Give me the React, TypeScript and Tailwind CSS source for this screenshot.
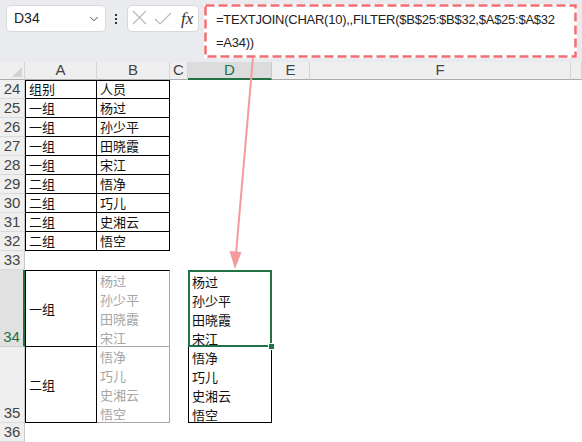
import { ChevronDown } from "lucide-react";

const cjk = { fontFamily: '"Noto Sans CJK SC", "Noto Sans", sans-serif' };
const latin = { fontFamily: '"Liberation Sans", Arial, sans-serif' };

const table = [
  ["组别", "人员"],
  ["一组", "杨过"],
  ["一组", "孙少平"],
  ["一组", "田晓霞"],
  ["一组", "宋江"],
  ["二组", "悟净"],
  ["二组", "巧儿"],
  ["二组", "史湘云"],
  ["二组", "悟空"],
];

const group1 = ["杨过", "孙少平", "田晓霞", "宋江"];
const group2 = ["悟净", "巧儿", "史湘云", "悟空"];

const RowHead = ({ n, active }: { n: number; active?: boolean }) => (
  <div
    style={latin}
    className={
      active
        ? "flex items-end justify-center bg-[#e1e1e1] border-b border-b-[#d0d0d0] border-r-2 border-r-[#217346] text-[15px] leading-[19px] text-[#217346]"
        : "flex items-end justify-center bg-[#efefef] border-b border-b-[#dadada] border-r border-r-[#c8c8c8] text-[15px] leading-[19px] text-[#444]"
    }
  >
    {n}
  </div>
);

const Blank = () => <div />;

const Toolbar = () => (
  <div className="relative flex h-[62px] items-start bg-[#e9ebee] pl-[6px] pt-[5px]">
    <div
      style={latin}
      className="flex h-[27px] w-[100px] items-center justify-between rounded-[5px] border border-[#d9d9d9] bg-white pl-[7px] pr-[4px] text-[14px] text-[#222]"
    >
      D34
      <ChevronDown size={14} strokeWidth={1.6} className="text-[#444]" />
    </div>
    <div className="ml-[9px] mt-[9px] flex flex-col gap-[2px]">
      <span className="h-[2px] w-[2px] bg-[#333]" />
      <span className="h-[2px] w-[2px] bg-[#333]" />
      <span className="h-[2px] w-[2px] bg-[#333]" />
    </div>
    <div className="ml-[10px] flex h-[27px] w-[72px] items-center rounded-[5px] border border-[#d9d9d9] bg-white pl-[4px]">
      <svg width="46" height="20" viewBox="0 0 46 20" className="shrink-0">
        <path d="M1 2 L14 15 M14 2 L1 15" stroke="#b9b9b9" strokeWidth="1.2" fill="none" />
        <path d="M23 10 L28 15 L39 4" stroke="#b9b9b9" strokeWidth="1.2" fill="none" />
      </svg>
      <span
        style={{ fontFamily: '"Liberation Serif", "Times New Roman", serif' }}
        className="ml-[3px] text-[17px] italic leading-none text-[#333]"
      >
        fx
      </span>
    </div>
    <div className="relative ml-[5px] mt-[-1px] h-[54px] w-[373px] bg-white">
      <div
        style={latin}
        className="pl-[12px] pt-[4px] text-[13px] leading-[23px] tracking-[-0.25px] text-[#222]"
      >
        <div>=TEXTJOIN(CHAR(10),,FILTER($B$25:$B$32,$A$25:$A$32</div>
        <div>=A34))</div>
      </div>
      <svg className="pointer-events-none absolute inset-0" width="373" height="54">
        <rect
          x="1.5"
          y="1.5"
          width="370"
          height="51"
          fill="none"
          stroke="#f36e72"
          strokeWidth="2.5"
          strokeDasharray="9 4"
        />
      </svg>
    </div>
  </div>
);

const App = () => {
  const heads = ["A", "B", "C", "D", "E", "F", ""];
  return (
    <div className="relative h-[442px] w-[582px] overflow-hidden bg-white">
      <Toolbar />
      <div className="grid grid-cols-[25px_72px_73px_18px_84px_38px_261px_1fr] grid-rows-[18px_repeat(10,19px)_77px_76px_19px]">
        {/* corner */}
        <div className="relative bg-[#efefef] border-r border-b border-r-[#d4d4d4] border-b-[#ababab]">
          <svg className="absolute left-0 top-0" width="25" height="18">
            <polygon points="22,5 22,15 12,15" fill="#d3d3d3" />
          </svg>
        </div>
        {heads.map((h) =>
          h === "D" ? (
            <div
              key={h}
              style={latin}
              className="flex items-center justify-center border-r border-r-[#c8c8c8] border-b-2 border-b-[#217346] bg-[#dcdcdc] text-[15px] text-[#217346]"
            >
              {h}
            </div>
          ) : (
            <div
              key={h || "rest"}
              style={latin}
              className="flex items-center justify-center border-r border-b border-r-[#d4d4d4] border-b-[#ababab] bg-[#efefef] text-[15px] text-[#444]"
            >
              {h}
            </div>
          )
        )}

        {/* rows 24-32 */}
        {table.map(([a, b], i) => (
          <div key={i} className="contents">
            <RowHead n={24 + i} />
            <div
              style={cjk}
              className={
                (i === 0 ? "shadow-[inset_0_1px_0_#000] " : "") +
                "border-l border-r border-b border-black px-[3px] text-[13px] leading-[18px] text-[#111]"
              }
            >
              {a}
            </div>
            <div
              style={cjk}
              className={
                (i === 0 ? "shadow-[inset_0_1px_0_#000] " : "") +
                "border-r border-b border-black px-[3px] text-[13px] leading-[18px] text-[#111]"
              }
            >
              {b}
            </div>
            <Blank />
            <Blank />
            <Blank />
            <Blank />
            <Blank />
          </div>
        ))}

        {/* row 33 */}
        <RowHead n={33} />
        <Blank />
        <Blank />
        <Blank />
        <Blank />
        <Blank />
        <Blank />
        <Blank />

        {/* row 34 */}
        <RowHead n={34} active />
        <div
          style={cjk}
          className="flex items-center border border-black px-[3px] text-[13px] text-[#111]"
        >
          一组
        </div>
        <div
          style={cjk}
          className="border-t border-t-black border-r border-b border-r-[#a8a8a8] border-b-[#a8a8a8] px-[3px] text-[13px] leading-[19px] text-[#a6a6a6]"
        >
          {group1.map((t) => (
            <div key={t}>{t}</div>
          ))}
        </div>
        <Blank />
        <div
          style={cjk}
          className="relative border-2 border-[#217346] px-[2px] text-[13px] leading-[19px] text-[#111]"
        >
          {group1.map((t) => (
            <div key={t}>{t}</div>
          ))}
          <span className="absolute -bottom-[5px] -right-[5px] h-[7px] w-[7px] border border-white bg-[#217346]" />
        </div>
        <Blank />
        <Blank />
        <Blank />

        {/* row 35 */}
        <RowHead n={35} />
        <div
          style={cjk}
          className="flex items-center border-l border-r border-b border-black px-[3px] text-[13px] text-[#111]"
        >
          二组
        </div>
        <div
          style={cjk}
          className="border-r border-b border-r-[#a8a8a8] border-b-[#a8a8a8] px-[3px] text-[13px] leading-[19px] text-[#a6a6a6]"
        >
          {group2.map((t) => (
            <div key={t}>{t}</div>
          ))}
        </div>
        <Blank />
        <div
          style={cjk}
          className="border-l border-r border-b border-black px-[3px] pt-[1px] text-[13px] leading-[19px] text-[#111]"
        >
          {group2.map((t) => (
            <div key={t}>{t}</div>
          ))}
        </div>
        <Blank />
        <Blank />
        <Blank />

        {/* row 36 */}
        <RowHead n={36} />
        <Blank />
        <Blank />
        <Blank />
        <Blank />
        <Blank />
        <Blank />
        <Blank />
      </div>

      {/* annotation arrow */}
      <svg className="pointer-events-none absolute left-0 top-0" width="582" height="442">
        <line x1="253" y1="57" x2="236" y2="254" stroke="#f49a9a" strokeWidth="2" />
        <polygon points="229.5,251 241.5,252 235,269" fill="#f49a9a" />
      </svg>
    </div>
  );
};

export default App;
